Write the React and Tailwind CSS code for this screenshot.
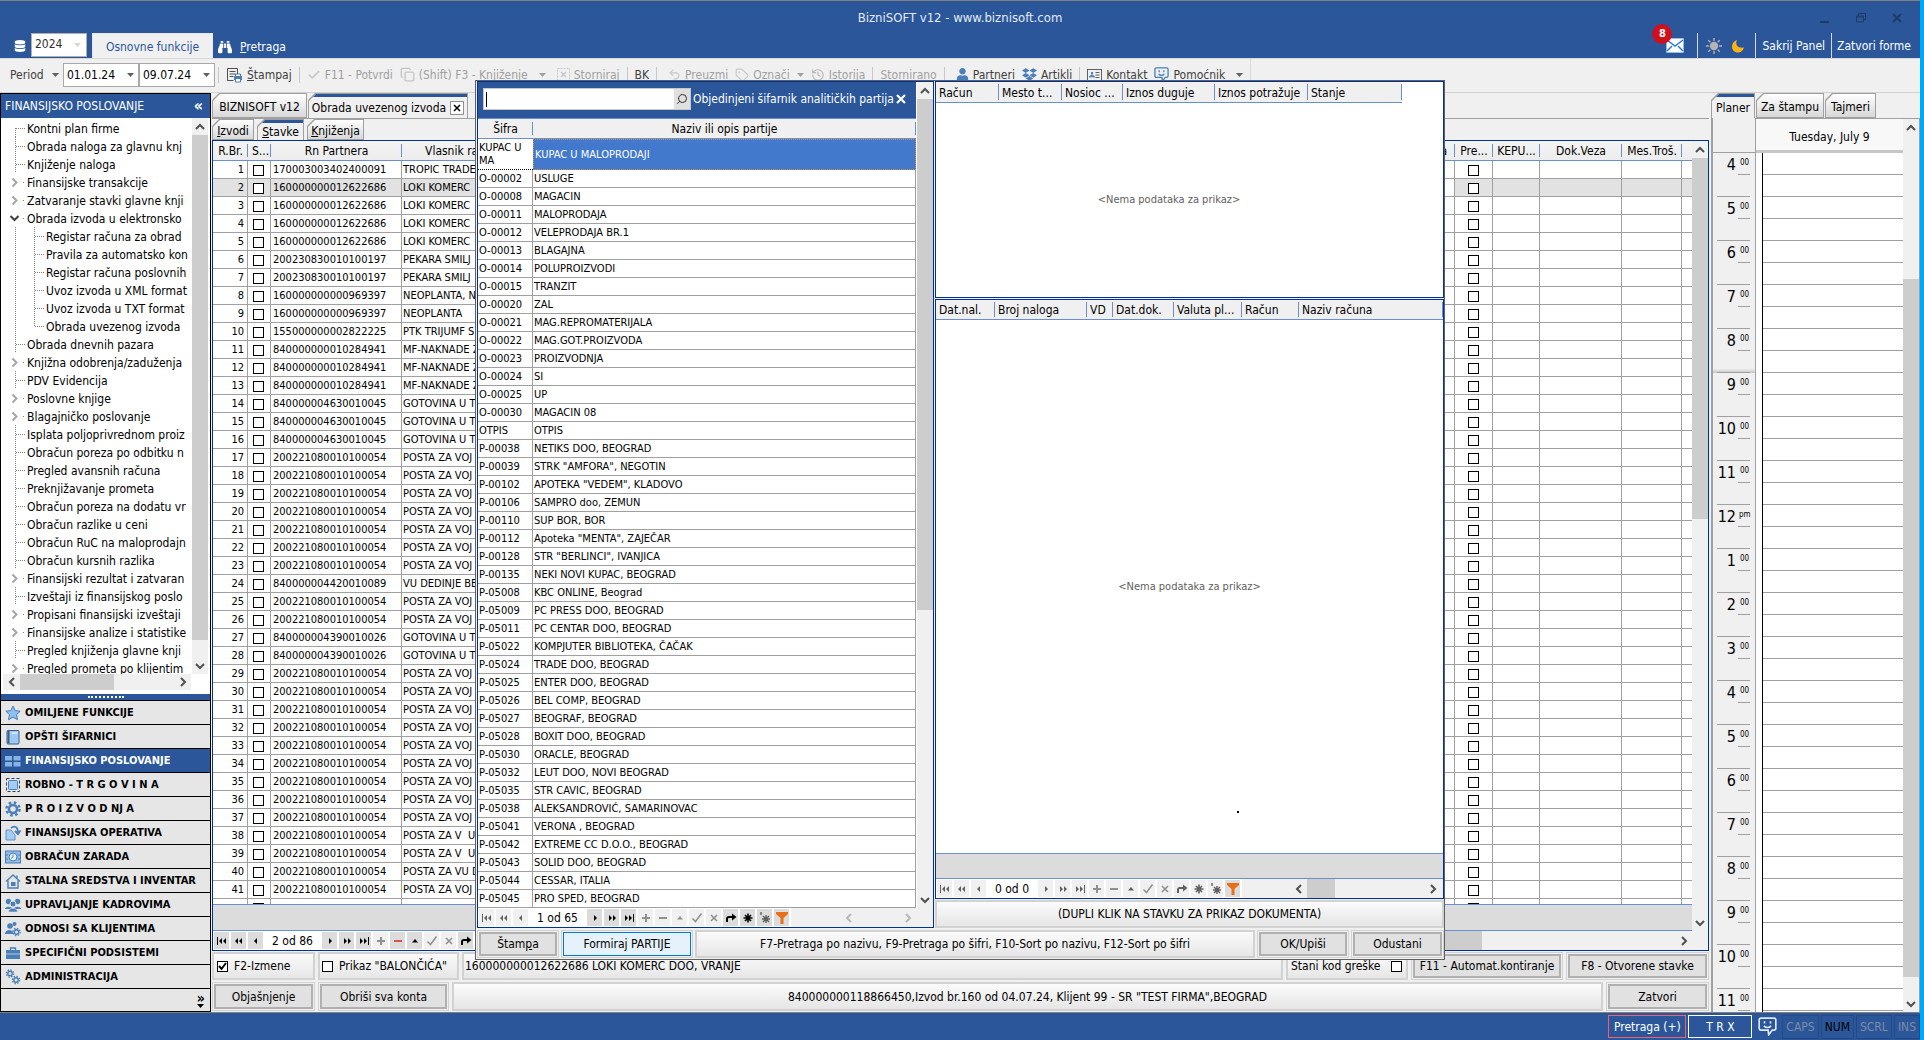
import React from "react";
import { FaBinoculars, FaUser, FaDropbox, FaDatabase } from "react-icons/fa";
import { Search, Copy, Undo2, Tag, History, Check } from "lucide-react";

const tree = [
  { t: "Kontni plan firme", first: true },
  { t: "Obrada naloga za glavnu knj" },
  { t: "Knjiženje naloga" },
  { t: "Finansijske transakcije", node: true },
  { t: "Zatvaranje stavki glavne knji", node: true },
  { t: "Obrada izvoda u elektronsko", node: true, open: true },
  { t: "Registar računa za obrad", sub: true },
  { t: "Pravila za automatsko kon", sub: true },
  { t: "Registar računa poslovnih", sub: true },
  { t: "Uvoz izvoda u XML format", sub: true },
  { t: "Uvoz izvoda u TXT format", sub: true },
  { t: "Obrada uvezenog izvoda", sub: true, last: true },
  { t: "Obrada dnevnih pazara" },
  { t: "Knjižna odobrenja/zaduženja", node: true },
  { t: "PDV Evidencija" },
  { t: "Poslovne knjige", node: true },
  { t: "Blagajničko poslovanje", node: true },
  { t: "Isplata poljoprivrednom proiz" },
  { t: "Obračun poreza po odbitku n" },
  { t: "Pregled avansnih računa" },
  { t: "Preknjižavanje prometa" },
  { t: "Obračun poreza na dodatu vr" },
  { t: "Obračun razlike u ceni" },
  { t: "Obračun RuC na maloprodajn" },
  { t: "Obračun kursnih razlika" },
  { t: "Finansijski rezultat i zatvaran", node: true },
  { t: "Izveštaji iz finansijskog poslo" },
  { t: "Propisani finansijski izveštaji", node: true },
  { t: "Finansijske analize i statistike", node: true },
  { t: "Pregled knjiženja glavne knji" },
  { t: "Pregled prometa po klijentim", node: true },
];

const modules = [
  ["star", "OMILJENE FUNKCIJE"],
  ["book", "OPŠTI ŠIFARNICI"],
  ["tiles", "FINANSIJSKO POSLOVANJE"],
  ["select", "ROBNO - T R G O V I N A"],
  ["gear", "P R O I Z V O D NJ A"],
  ["flow", "FINANSIJSKA OPERATIVA"],
  ["pay", "OBRAČUN ZARADA"],
  ["house", "STALNA SREDSTVA I INVENTAR"],
  ["people", "UPRAVLJANJE KADROVIMA"],
  ["client", "ODNOSI SA KLIJENTIMA"],
  ["case", "SPECIFIČNI PODSISTEMI"],
  ["gears", "ADMINISTRACIJA"],
];

const POSTA = ["200221080010100054", "POSTA ZA VOJ"];
const LOKI = ["160000000012622686", "LOKI KOMERC"];
const GOT = ["840000004630010045", "GOTOVINA U T"];
const MF = ["840000000010284941", "MF-NAKNADE Z"];
const PEKARA = ["200230830010100197", "PEKARA SMILJ"];
const rows = [
  ["170003003402400091", "TROPIC TRADE"],
  LOKI, LOKI, LOKI, LOKI,
  PEKARA, PEKARA,
  ["160000000000969397", "NEOPLANTA, N"],
  ["160000000000969397", "NEOPLANTA"],
  ["155000000002822225", "PTK TRIJUMF S"],
  MF, MF, MF,
  GOT, GOT, GOT,
  POSTA, POSTA, POSTA, POSTA, POSTA, POSTA, POSTA,
  ["840000004420010089", "VU DEDINJE BE"],
  POSTA, POSTA,
  ["840000004390010026", "GOTOVINA U T"],
  ["840000004390010026", "GOTOVINA U T"],
  POSTA, POSTA, POSTA, POSTA, POSTA, POSTA, POSTA, POSTA, POSTA,
  ["200221080010100054", "POSTA ZA V  U"],
  ["200221080010100054", "POSTA ZA V  U"],
  ["200221080010100054", "POSTA ZA VU D"],
  POSTA,
];

const parties = [
  ["O-00002", "USLUGE"],
  ["O-00008", "MAGACIN"],
  ["O-00011", "MALOPRODAJA"],
  ["O-00012", "VELEPRODAJA BR.1"],
  ["O-00013", "BLAGAJNA"],
  ["O-00014", "POLUPROIZVODI"],
  ["O-00015", "TRANZIT"],
  ["O-00020", "ZAL"],
  ["O-00021", "MAG.REPROMATERIJALA"],
  ["O-00022", "MAG.GOT.PROIZVODA"],
  ["O-00023", "PROIZVODNJA"],
  ["O-00024", "SI"],
  ["O-00025", "UP"],
  ["O-00030", "MAGACIN 08"],
  ["OTPIS", "OTPIS"],
  ["P-00038", "NETIKS DOO, BEOGRAD"],
  ["P-00039", 'STRK "AMFORA", NEGOTIN'],
  ["P-00102", 'APOTEKA "VEDEM", KLADOVO'],
  ["P-00106", "SAMPRO doo, ZEMUN"],
  ["P-00110", "SUP BOR, BOR"],
  ["P-00112", 'Apoteka "MENTA", ZAJEČAR'],
  ["P-00128", 'STR "BERLINCI", IVANJICA'],
  ["P-00135", "NEKI NOVI KUPAC, BEOGRAD"],
  ["P-05008", "KBC ONLINE, Beograd"],
  ["P-05009", "PC PRESS DOO, BEOGRAD"],
  ["P-05011", "PC CENTAR DOO, BEOGRAD"],
  ["P-05022", "KOMPJUTER BIBLIOTEKA, ČAČAK"],
  ["P-05024", "TRADE DOO, BEOGRAD"],
  ["P-05025", "ENTER DOO, BEOGRAD"],
  ["P-05026", "BEL COMP, BEOGRAD"],
  ["P-05027", "BEOGRAF, BEOGRAD"],
  ["P-05028", "BOXIT DOO, BEOGRAD"],
  ["P-05030", "ORACLE, BEOGRAD"],
  ["P-05032", "LEUT DOO, NOVI BEOGRAD"],
  ["P-05035", "STR CAVIC, BEOGRAD"],
  ["P-05038", "ALEKSANDROVIĆ, SAMARINOVAC"],
  ["P-05041", "VERONA , BEOGRAD"],
  ["P-05042", "EXTREME CC D.O.O., BEOGRAD"],
  ["P-05043", "SOLID DOO, BEOGRAD"],
  ["P-05044", "CESSAR, ITALIA"],
  ["P-05045", "PRO SPED, BEOGRAD"],
];

const hours = ["4", "5", "6", "7", "8", "9", "10", "11", "12", "1", "2", "3", "4", "5", "6", "7", "8", "9", "10", "11"];

function Chevron({ dir, color = "#505050", size = 12 }) {
  const d = { up: "M2 8l4-4 4 4", down: "M2 4l4 4 4-4", left: "M8 2L4 6l4 4", right: "M4 2l4 4-4 4" }[dir];
  return (
    <svg width={size} height={size} viewBox="0 0 12 12" fill="none" stroke={color} strokeWidth="2">
      <path d={d} />
    </svg>
  );
}

function Caret({ color = "#606060" }) {
  return (
    <svg width="7" height="4" viewBox="0 0 7 4" fill={color} className="shrink-0">
      <path d="M0 0h7L3.500 4z" />
    </svg>
  );
}

// Vertical scrollbar; the space over and under the thumb is given in flex shares
function VScroll({ before = 0, thumb, after, label }) {
  return (
    <div className="flex w-4 shrink-0 flex-col bg-[#f0f0f0]">
      <button aria-label={label + " gore"} className="flex h-[17px] shrink-0 items-center justify-center"><Chevron dir="up" /></button>
      <div className="flex min-h-0 flex-1 flex-col">
        <div style={{ flexGrow: before }} />
        <div className="bg-[#cdcdcd]" style={{ flexGrow: thumb }} />
        <div style={{ flexGrow: after }} />
      </div>
      <button aria-label={label + " dole"} className="flex h-[17px] shrink-0 items-center justify-center"><Chevron dir="down" /></button>
    </div>
  );
}

function Box({ label }) {
  return (
    <input
      type="checkbox"
      aria-label={label}
      className="block h-[11px] w-[11px] appearance-none border border-black bg-white"
    />
  );
}

const glyphs = {
  first: <path d="M1 2v8h1V2zM3 6l3-3v6zM7 6l3-3v6z" />,
  prevPage: <path d="M2 6l3-3v6zM6 6l3-3v6z" />,
  prev: <path d="M4 6l3-3v6z" />,
  next: <path d="M8 6L5 3v6z" />,
  nextPage: <path d="M6 6L3 3v6zM10 6L7 3v6z" />,
  last: <path d="M5 6L2 3v6zM9 6L6 3v6zM10 2v8h1V2z" />,
  plus: <path d="M5 2h2v3h3v2H7v3H5V7H2V5h3z" />,
  minus: <path d="M2 5h8v2H2z" />,
  up: <path d="M6 4l3 3.500H3z" />,
  check: <path d="M1.500 6.500l3 3 6-8" fill="none" stroke="currentColor" strokeWidth="1.500" />,
  x: <path d="M3 3l6 6M9 3l-6 6" fill="none" stroke="currentColor" strokeWidth="1.600" />,
  redo: <path d="M1 10V7c0-2 1-3 3-3h3V1.500L11.500 5 7 8.500V6H4C3 6 3 6.500 3 7.500V10z" />,
  star: <path d="M6 1.500v9M1.500 6h9M3 3l6 6M9 3l-6 6" fill="none" stroke="currentColor" strokeWidth="1.600" />,
  star2: <path d="M7 3v8M3 7h8M4 4l6 6M10 4l-6 6M2 0v3" fill="none" stroke="currentColor" strokeWidth="1.400" />,
  filter: <path d="M0 0h12v2L7.500 6v6h-3V6L0 2z" fill="#e8701a" />,
};

function NavBtn({ g, mode, color }) {
  const cls = {
    dark: "bg-[#dcdcdc] text-black",
    mid: "bg-[#dcdcdc] text-[#606060]",
    light: "bg-[#f0f0f0] text-[#606060]",
    off: "bg-[#f0f0f0] text-[#909090]",
  }[mode];
  return (
    <button aria-label={g} className={"flex h-[17px] w-[15px] shrink-0 items-center justify-center " + cls} style={color ? { color } : undefined}>
      <svg width="12" height="12" viewBox="0 0 12 12" fill="currentColor">{glyphs[g]}</svg>
    </button>
  );
}

function Navigator({ text, textWidth = "w-[55px]", back, fwd, items, children }) {
  return (
    <div className="flex h-[19px] shrink-0 items-center gap-[2px] bg-white pl-px">
      <NavBtn g="first" mode={back} />
      <NavBtn g="prevPage" mode={back} />
      <NavBtn g="prev" mode={back} />
      <span className={"text-center whitespace-nowrap " + textWidth}>{text}</span>
      <NavBtn g="next" mode={fwd} />
      <NavBtn g="nextPage" mode={fwd} />
      <NavBtn g="last" mode={fwd} />
      {items.map(([g, mode, color]) => <NavBtn key={g} g={g} mode={mode} color={color} />)}
      {children}
    </div>
  );
}

function TreeLines({ row }) {
  const dots = { stroke: "#808080", strokeWidth: 1, strokeDasharray: "1 1", fill: "none" };
  if (row.sub) {
    return (
      <svg width="45" height="18" viewBox="0 0 45 18" className="shrink-0">
        <path d="M14.500 0V18" {...dots} />
        <path d={row.last ? "M33.500 0V9" : "M33.500 0V18"} {...dots} />
        <path d="M34 9.500H43" {...dots} />
      </svg>
    );
  }
  return (
    <svg width="26" height="18" viewBox="0 0 26 18" className="shrink-0">
      {!row.node && <path d={row.first ? "M14.500 9V18" : "M14.500 0V18"} {...dots} />}
      {!row.node && <path d="M15 9.500H24" {...dots} />}
      {row.node && <path d="M22 9.500h1" stroke="#808080" />}
      {row.node && (row.open
        ? <path d="M9.500 7l4 4 4-4" fill="none" stroke="#404040" strokeWidth="2" />
        : <path d="M11.500 5.500l4 4-4 4" fill="none" stroke="#a6a6a6" strokeWidth="2" />)}
    </svg>
  );
}

function Gear({ cx, cy, r, w }) {
  return (
    <g transform={`translate(${cx} ${cy})`} fill="none" stroke="#4a7fb8">
      <circle r={r} strokeWidth={w} />
      <circle r={r + w} strokeWidth={w} strokeDasharray={`${((r + w) * Math.PI) / 8} ${((r + w) * Math.PI) / 8}`} />
    </g>
  );
}

function ModuleIcon({ name }) {
  const b = "#4a7fb8";
  const icons = {
    star: <path d="M8 1l2.200 4.600 5 .6-3.700 3.500 1 5L8 12.200 3.500 14.700l1-5L.8 6.200l5-.6z" fill="#8fc0ee" stroke={b} />,
    book: <g><rect x="2" y="1.500" width="12" height="13.500" rx="1" fill="#9cc8f2" stroke="#3d5f8a" /><path d="M3.500 2v12.500" stroke="#3d5f8a" strokeWidth="2" /><path d="M6.500 4h6" stroke="#fff" /></g>,
    tiles: <g fill="#84b4e4"><rect y="3" width="7" height="4.500" /><rect x="8.500" y="3" width="7" height="4.500" /><rect y="9" width="7" height="4.500" /><rect x="8.500" y="9" width="7" height="4.500" /></g>,
    select: <g><rect x="1.500" y="1.500" width="13" height="13" fill="none" stroke="#2b3f5c" strokeDasharray="3 2" /><rect x="3.500" y="3.500" width="9" height="9" rx="1" fill="#a4cdf5" stroke={b} /></g>,
    gear: <Gear cx={8} cy={8} r={4} w={2.5} />,
    flow: <g stroke={b}><path d="M1 5h5l4 5v5H1z" fill="#a4cdf5" strokeWidth=".8" /><path d="M6 3c4-3 7-1 7 5M10 6l3 3 2.500-3.500" fill="none" strokeWidth="1.800" /></g>,
    pay: <g><rect x="0.500" y="2" width="15" height="12" fill="#8fbbe6" stroke={b} /><circle cx="8" cy="8" r="4" fill="#e6f1fb" stroke={b} /><path d="M8 5.500V8l-2 1.500M1 6h2M1 10h2M13 6h2M13 10h2" stroke={b} fill="none" /></g>,
    house: <g fill="none" stroke={b} strokeWidth="1.400"><path d="M1 8.500L8 2l7 6.500M3 7.500V15h10V7.500M12 2.500V5" /><rect x="6" y="9" width="4.500" height="4" fill={b} stroke="none" /></g>,
    people: <g fill={b}><circle cx="3.500" cy="4.500" r="2.700" /><circle cx="12.500" cy="4.500" r="2.700" /><path d="M0 12c0-3 7-3 7 0zM9 12c0-3 7-3 7 0z" /><circle cx="8" cy="7" r="3" stroke="#e6e6e6" /><path d="M3.500 15c0-5 9-5 9 0z" stroke="#e6e6e6" strokeWidth=".6" /></g>,
    client: <g><circle cx="5" cy="5" r="2.800" fill={b} /><circle cx="9.500" cy="3" r="2" fill={b} /><path d="M0 13c0-5 8-5 8-1v1z" fill={b} /><Gear cx={11.5} cy={11} r={2.2} w={1.4} /></g>,
    case: <g><rect x="1" y="5" width="14" height="9" fill={b} /><path d="M5.500 5V3h5v2" fill="none" stroke={b} strokeWidth="1.300" /><path d="M1 9h14" stroke="#cfe0f2" strokeWidth=".8" /></g>,
    gears: <g><Gear cx={5} cy={4.5} r={2.2} w={1.4} /><Gear cx={11} cy={11} r={2.2} w={1.4} /></g>,
  };
  return <svg width="16" height="16" viewBox="0 0 16 16" className="shrink-0">{icons[name]}</svg>;
}

function SmileBubble({ color, size = 16 }) {
  return (
    <svg width={size} height={size} viewBox="0 0 16 16" fill="none" stroke={color} strokeWidth="1.400">
      <path d="M2.500 1h11c1 0 1.500.5 1.500 1.500v7c0 1-.5 1.500-1.500 1.500H12l-3 4-.5-4h-6C1.500 11 1 10.500 1 9.500v-7C1 1.500 1.500 1 2.500 1z" />
      <path d="M5.500 3.500v2M10.500 3.500v2M5 7.500c1.500 1.800 4.500 1.800 6 0" />
    </svg>
  );
}

function Tab({ active, children, width }) {
  return (
    <button
      className={
        "h-full shrink-0 bg-[#a0a0a0] pt-px pr-px pl-px [clip-path:polygon(7px_0,100%_0,100%_100%,0_100%,0_7px)] " +
        (active ? "" : "pb-px ") + width
      }
    >
      <span
        className={
          "flex h-full items-center justify-center gap-1 whitespace-nowrap [clip-path:polygon(7px_0,100%_0,100%_100%,0_100%,0_7px)] " +
          (active ? "border-t-[3px] border-[#2b579a] bg-[#f0f0f0]" : "bg-linear-to-b from-white to-[#d8d8d8] pt-[3px]")
        }
      >
        {children}
      </span>
    </button>
  );
}

function Panel({ className = "", children }) {
  return (
    <div className={"flex items-center border-2 border-[#d2d2d2] bg-linear-to-b from-[#fbfbfb] to-[#e6e6e6] " + className}>
      {children}
    </div>
  );
}

function Btn({ className = "", children }) {
  return (
    <div className={"flex border border-[#d2d2d2] p-px " + className}>
      <button className="flex-1 border-2 border-[#b0b0b0] bg-[#e1e1e1] whitespace-nowrap">{children}</button>
    </div>
  );
}

function ToolBtn({ off, icon, children, className = "" }) {
  return (
    <button className={"flex shrink-0 items-center gap-1 whitespace-nowrap " + (off ? "text-[#a0a0a0] " : "text-[#404040] ") + className}>
      {icon}
      {children}
    </button>
  );
}

const Sep = () => <div className="h-4 w-px shrink-0 bg-[#c8c8c8]" />;

function TopBar() {
  return (
    <header className="shrink-0 border-t border-[#808080] bg-[#2b579a] text-white">
      <div className="flex h-[32px] items-center px-[18px] pt-px">
        <div className="flex-1" />
        <h1 className="text-[13px] text-[#e4ebf5]">BizniSOFT v12 - www.biznisoft.com</h1>
        <div className="flex flex-1 items-center justify-end gap-[26px] text-[#1e3a66]">
          <button aria-label="Umanji"><svg width="10" height="10" viewBox="0 0 10 10"><path d="M0 9h9" stroke="currentColor" strokeWidth="2" /></svg></button>
          <button aria-label="Vrati"><svg width="10" height="10" viewBox="0 0 10 10" fill="none" stroke="currentColor"><path d="M2.500 2.500v-2h7v6h-2M.5 3h7v6h-7zM.5 4h7" /></svg></button>
          <button aria-label="Zatvori"><svg width="10" height="10" viewBox="0 0 10 10"><path d="M1 1l8 8M9 1L1 9" stroke="currentColor" strokeWidth="2" /></svg></button>
        </div>
      </div>
      <div className="flex h-[25px] items-stretch">
        <div className="flex items-center gap-[5px] pl-[14px]">
          <FaDatabase size={12} />
          <div className="relative flex h-full">
            <select aria-label="Godina" className="h-[24px] w-[56px] appearance-none self-start border border-[#b0b0b0] bg-white pb-[3px] pl-[3px] text-[12px] text-[#303030]">
              <option>2024</option>
            </select>
            <span className="pointer-events-none absolute top-[10px] right-[6px]"><Caret color="#d8d8d8" /></span>
          </div>
        </div>
        <button className="ml-[5px] w-[121px] border border-b-0 border-[#e8e8e8] bg-[#f0f0f0] pt-[2px] text-[#2b579a]">Osnovne funkcije</button>
        <button className="ml-[5px] flex items-center gap-2 pt-[2px]"><FaBinoculars size={14} /><span><u>P</u>retraga</span></button>
        <div className="ml-auto flex items-center">
          <div className="relative mr-[13px]">
            <svg width="18" height="15" viewBox="0 0 18 15"><rect width="18" height="15" fill="#fff" stroke="#2b7cd3" /><path d="M1 2l8 6 8-6M1 13l5-5M17 13l-5-5" fill="none" stroke="#2b7cd3" strokeWidth="1.500" /></svg>
            <span className="absolute -top-[14px] -left-[14px] flex h-5 w-5 items-center justify-center rounded-full bg-[#d0101c] text-[11px] font-bold">8</span>
          </div>
          <div className="h-full w-px bg-[#d8d8d8]" />
          <svg width="16" height="16" viewBox="0 0 16 16" className="mx-2" stroke="#b4b4b4" strokeWidth="1.400"><circle cx="8" cy="8" r="3.500" fill="#b4b4b4" /><path d="M8 0v3M8 13v3M0 8h3M13 8h3M2.300 2.300l2 2M11.700 11.700l2 2M13.700 2.300l-2 2M4.300 11.700l-2 2" /></svg>
          <svg width="14" height="14" viewBox="0 0 14 14" className="mr-[10px] ml-px" fill="#fcb316"><path d="M6 1C4 5 6 9.500 13 8.500C12 12 9.500 13.500 7 13.500C3.500 13.500 1 11 1 7.500C1 4.500 3 1.800 6 1z" /></svg>
          <div className="h-full w-px bg-[#d8d8d8]" />
          <button className="px-[6px]">Sakrij Panel</button>
          <div className="h-full w-px bg-[#d8d8d8]" />
          <button className="pr-[9px] pl-[5px]">Zatvori forme</button>
        </div>
      </div>
    </header>
  );
}

function DateBox({ label, value }) {
  return (
    <div className="flex h-6 w-[76px] shrink-0 items-center border border-[#a8a8a8] bg-white pr-1 pl-[3px]">
      <input aria-label={label} defaultValue={value} className="w-0 flex-1 text-[12px] text-black outline-none" />
      <Caret />
    </div>
  );
}

function Toolbar() {
  return (
    <div className="flex h-[35px] shrink-0 items-center border-t border-b border-b-[#d0d0d0] border-t-[#d8d8d8] bg-[#f0f0f0] pb-[2px] pl-[10px]">
      <ToolBtn className="w-[53px] justify-between pr-1">Period <Caret /></ToolBtn>
      <DateBox label="Datum od" value="01.01.24" />
      <DateBox label="Datum do" value="09.07.24" />
      <div className="flex items-center gap-[7px] pl-[3px]">
        <Sep />
        <ToolBtn icon={<svg width="17" height="16" viewBox="0 0 17 16"><path d="M1.500 1.500h10v6M1.500 1.500v12h6M3.500 4.500h6M3.500 7h6M3.500 9.500h4" fill="none" stroke="#505050" /><rect x="8" y="9" width="8" height="4" fill="#4a7fb8" /><path d="M9.500 9V7h5v2M9.500 12v3h5v-3" fill="#fff" stroke="#4a7fb8" /></svg>}><span><u>Š</u>tampaj</span></ToolBtn>
        <Sep />
        <ToolBtn off icon={<Check size={14} strokeWidth={3} color="#c8c8c8" />}>F11 - Potvrdi</ToolBtn>
        <ToolBtn off icon={<Copy size={15} color="#c4c4c4" />}>(Shift) F3 - Knjiženje</ToolBtn>
        <span className="ml-1"><Caret color="#a0a0a0" /></span>
        <ToolBtn off className="ml-1" icon={<svg width="13" height="13" viewBox="0 0 13 13" fill="none" stroke="#c8c8c8"><rect x=".5" y=".5" width="12" height="12" strokeDasharray="2 1" /><path d="M4 4l5 5M9 4L4 9" strokeWidth="1.500" /></svg>}>Storniraj</ToolBtn>
        <Sep />
        <ToolBtn>BK</ToolBtn>
        <Sep />
        <ToolBtn off className="ml-1" icon={<Undo2 size={13} color="#c8c8c8" />}>Preuzmi</ToolBtn>
        <ToolBtn off icon={<Tag size={14} color="#c8c8c8" />}>Označi</ToolBtn>
        <Caret color="#a0a0a0" />
        <ToolBtn off icon={<History size={14} color="#b8b8b8" />}>Istorija</ToolBtn>
        <Sep />
        <ToolBtn off>Stornirano</ToolBtn>
        <Sep />
        <ToolBtn className="ml-1" icon={<FaUser size={13} color="#4a7fb8" />}>Partneri</ToolBtn>
        <ToolBtn icon={<FaDropbox size={15} color="#4a7fb8" />}>Artikli</ToolBtn>
        <Sep />
        <ToolBtn icon={<svg width="15" height="12" viewBox="0 0 15 12" fill="none" stroke="#606060"><rect x=".5" y=".5" width="14" height="11" /><path d="M8.500 3.500h4M8.500 6h4M8.500 8.500h4" /><path d="M3 8.500c0-2 4-2 4 0M5 3v2.500" stroke="#4a7fb8" strokeWidth="2" /></svg>}>Kontakt</ToolBtn>
        <ToolBtn icon={<SmileBubble color="#4a7fb8" size={15} />}>Pomoćnik</ToolBtn>
        <span className="ml-1"><Caret /></span>
        <div className="h-[32px] w-px bg-[#d8d8d8]" />
      </div>
    </div>
  );
}

function Sidebar() {
  return (
    <aside className="flex w-[211px] shrink-0 flex-col border border-black bg-white">
      <div className="flex h-[24px] shrink-0 items-center justify-between bg-[#2b579a] pr-[7px] pl-[4px] text-white">
        <h2 className="whitespace-nowrap">FINANSIJSKO POSLOVANJE</h2>
        <button aria-label="Skupi" className="text-[16px] leading-4 font-bold">«</button>
      </div>
      <div className="flex min-h-0 flex-1 overflow-hidden">
        <ul className="min-w-0 flex-1 overflow-hidden pt-px">
          {tree.map((row) => (
            <li key={row.t} className="flex h-[18px] items-center whitespace-nowrap">
              <TreeLines row={row} />
              <a href="#stavka" className="pt-[2px]">{row.t}</a>
            </li>
          ))}
        </ul>
        <div className="flex pr-[2px]"><VScroll thumb={504} after={17} label="Stablo" /></div>
      </div>
      <div className="flex h-[20px] shrink-0 items-start pl-[2px]">
        <div className="flex h-[16px] w-[188px] items-center bg-[#f0f0f0]">
          <button aria-label="Levo" className="flex w-[17px] justify-center"><Chevron dir="left" /></button>
          <div className="h-full w-[94px] bg-[#cdcdcd]" />
          <div className="flex-1" />
          <button aria-label="Desno" className="flex w-[17px] justify-center"><Chevron dir="right" /></button>
        </div>
      </div>
      <div className="flex h-[6px] shrink-0 items-center justify-center bg-[#2b579a]">
        <div className="w-[36px] border-t-2 border-dotted border-white" />
      </div>
      <nav>
        {modules.map(([icon, label]) => (
          <a
            key={label}
            href="#modul"
            className={
              "flex h-6 items-center gap-[4px] border-t border-black pl-[4px] text-[11px] font-bold whitespace-nowrap " +
              (icon === "tiles" ? "bg-[#2b579a] text-white" : "bg-[#e6e6e6] text-black")
            }
          >
            <ModuleIcon name={icon} />
            {label}
          </a>
        ))}
      </nav>
      <div className="flex h-[23px] shrink-0 flex-col items-end justify-center border-t border-black bg-[#e6e6e6] pr-[5px]">
        <button aria-label="Više" className="flex flex-col items-center text-[14px] leading-3 font-bold">»<Caret color="#000" /></button>
      </div>
    </aside>
  );
}

const headCell = "relative border-b border-[#6a8fd0] px-1 pt-px pb-0 font-normal whitespace-nowrap overflow-hidden after:absolute after:right-0 after:top-[3px] after:bottom-[3px] after:w-px after:bg-[#6a8fd0]";
const cell = "h-[18px] overflow-hidden border-r border-b border-[#a0a0a0] p-0 pt-px whitespace-pre";

function MainGrid() {
  return (
    <div className="mb-px flex min-h-0 flex-1 flex-col border border-[#00309a] bg-white">
      <div className="flex min-h-0 flex-1">
        <div className="flex min-w-0 flex-1 flex-col">
          <div className="min-h-0 flex-1 overflow-hidden">
            <table className="w-full table-fixed border-separate border-spacing-0 text-[11px]">
              <colgroup>
                <col className="w-[35px]" /><col className="w-[23px]" /><col className="w-[131px]" /><col className="w-[128px]" />
                <col /><col className="w-[38px]" /><col className="w-[47px]" /><col className="w-[82px]" /><col className="w-[60px]" /><col className="w-[10px]" />
              </colgroup>
              <thead>
                <tr className="h-[20px] bg-linear-to-b from-[#f4f4f4] to-[#ececec] text-[12px]">
                  <th className={headCell + " px-0"}>R.Br.</th>
                  <th className={headCell + " px-0"}>S...</th>
                  <th className={headCell}>Rn Partnera</th>
                  <th className={headCell + " pl-[23px] text-left"}>Vlasnik ra</th>
                  <th className={headCell + " pr-2 text-right"}>a</th>
                  <th className={headCell + " px-0"}>Pre...</th>
                  <th className={headCell + " px-0"}>KEPU...</th>
                  <th className={headCell}>Dok.Veza</th>
                  <th className={headCell + " px-0"}>Mes.Troš.</th>
                  <th className="border-b border-[#6a8fd0]" />
                </tr>
              </thead>
              <tbody>
                {rows.map(([rn, name], i) => (
                  <tr key={i} className={i === 1 ? "bg-[#e2e2e2]" : "bg-white"}>
                    <td className={cell + " pr-[3px] text-right"}>{i + 1}</td>
                    <td className={cell + " pl-[5px]"}><Box label={"Stavka " + (i + 1)} /></td>
                    <td className={cell + " pl-[2px]"}>{rn}</td>
                    <td className={cell + " pl-px"}>{name}</td>
                    <td className={cell + " bg-white"} />
                    <td className={cell + " pl-[13px]"}><Box label={"Prenos " + (i + 1)} /></td>
                    <td className={cell} />
                    <td className={cell} />
                    <td className={cell} />
                    <td className="border-b border-[#a0a0a0]" />
                  </tr>
                ))}
                <tr>
                  <td className={cell} />
                  <td className={cell + " pl-[5px]"}><Box label="Stavka 42" /></td>
                  <td className={cell} /><td className={cell} /><td className={cell} />
                  <td className={cell + " pl-[13px]"}><Box label="Prenos 42" /></td>
                  <td className={cell} /><td className={cell} /><td className={cell} /><td />
                </tr>
              </tbody>
            </table>
          </div>
          <div className="h-[27px] shrink-0 border-t border-b border-[#6a8fd0] bg-[#dcdcdc]" />
        </div>
        <VScroll thumb={360} after={394} label="Stavke" />
      </div>
      <Navigator
        text="2 od 86"
        back="dark"
        fwd="dark"
        items={[["plus", "off"], ["minus", "mid", "#d85050"], ["up", "dark"], ["check", "off"], ["x", "off"], ["redo", "dark"], ["star", "dark"], ["star2", "mid"], ["filter", "mid"]]}
      >
        <div className="flex h-full flex-1 items-center justify-end bg-[#f0f0f0] pr-4">
          <div className="mr-[194px] h-full w-[300px] bg-[#cdcdcd]" />
          <button aria-label="Desno" className="flex w-4 justify-center"><Chevron dir="right" /></button>
        </div>
      </Navigator>
    </div>
  );
}

function Main() {
  return (
    <main className="flex min-w-0 flex-1 flex-col pr-[2px] pl-px">
      <div className="flex h-[26px] shrink-0 gap-px border-b border-[#a0a0a0]">
        <Tab width="w-[95px]">BIZNISOFT v12</Tab>
        <Tab active width="w-[160px]">
          Obrada uvezenog izvoda
          <span className="flex h-[14px] w-[14px] items-center justify-center border border-[#909090] bg-white">
            <svg width="8" height="8" viewBox="0 0 8 8"><path d="M1 1l6 6M7 1L1 7" stroke="#000" strokeWidth="1.500" /></svg>
          </span>
        </Tab>
      </div>
      <div className="flex h-[21px] shrink-0 gap-[3px]">
        <Tab width="w-[42px]"><span><u>I</u>zvodi</span></Tab>
        <Tab active width="w-[47px]"><span><u>S</u>tavke</span></Tab>
        <Tab width="w-[57px]"><span><u>K</u>njiženja</span></Tab>
      </div>
      <MainGrid />
      <div className="flex flex-col gap-[2px] pb-px">
        <div className="flex h-[28px] gap-[3px]">
          <Panel className="w-[103px] pl-[3px]">
            <span className="relative">
              <input id="f2" type="checkbox" defaultChecked className="block h-[11px] w-[11px] appearance-none border border-black bg-white" />
              <svg width="9" height="9" viewBox="0 0 9 9" className="pointer-events-none absolute top-px left-px"><path d="M1 4l2.500 3L8 1" fill="none" stroke="#000" strokeWidth="2" /></svg>
            </span>
            <label htmlFor="f2" className="ml-[6px]">F2-Izmene</label>
          </Panel>
          <Panel className="w-[141px] pl-[2px]">
            <input id="balon" type="checkbox" className="block h-[11px] w-[11px] appearance-none border border-black bg-white" />
            <label htmlFor="balon" className="ml-[6px] whitespace-nowrap">Prikaz "BALONČIĆA"</label>
          </Panel>
          <Panel className="flex-1 pl-px">160000000012622686 LOKI KOMERC DOO, VRANJE</Panel>
          <Panel className="w-[122px] justify-between pr-1 pl-[3px] whitespace-nowrap">
            <label htmlFor="stani">Stani kod greške</label>
            <input id="stani" type="checkbox" className="block h-[11px] w-[11px] appearance-none border border-black bg-white" />
          </Panel>
          <Btn className="w-[152px]">F11 - Automat.kontiranje</Btn>
          <Btn className="w-[143px]">F8 - Otvorene stavke</Btn>
        </div>
        <div className="flex h-[29px] gap-[3px]">
          <Btn className="w-[103px]">Objašnjenje</Btn>
          <Btn className="w-[131px]">Obriši sva konta</Btn>
          <Panel className="flex-1 justify-center">840000000118866450,Izvod br.160 od 04.07.24, Klijent 99 - SR "TEST FIRMA",BEOGRAD</Panel>
          <Btn className="w-[103px]">Zatvori</Btn>
        </div>
      </div>
    </main>
  );
}

function Planner() {
  return (
    <aside className="flex w-[209px] shrink-0 flex-col">
      <div className="flex h-[25px] shrink-0 gap-px">
        <Tab active width="w-[44px]">Planer</Tab>
        <Tab width="w-[68px]">Za štampu</Tab>
        <Tab width="w-[51px]">Tajmeri</Tab>
      </div>
      <div className="flex min-h-0 flex-1">
        <div className="flex w-[45px] shrink-0 flex-col overflow-hidden border-r border-l-2 border-[#a0a0a0] bg-[#f0f0f0]">
          <div className="h-[35px] shrink-0 border-b border-[#a0a0a0]" />
          {hours.map((h, i) => (
            <div
              key={i}
              className={
                "flex h-[44px] shrink-0 flex-col items-end pr-[5px] pl-1 " +
                (i === 4 ? "bg-linear-to-b from-[#f0f0f0] from-90% to-[#c4c4c4]" : "")
              }
            >
              <div className="flex h-[21px] items-start gap-[3px]">
                <span className="text-[16px] leading-6">{h}</span>
                <span className="w-[11px] text-center text-[8px] leading-5">{h === "12" ? "pm" : "00"}</span>
              </div>
              <div className="h-px w-3 bg-[#a0a0a0]" />
              <div className="mt-[21px] h-px w-full bg-[#a0a0a0]" />
            </div>
          ))}
        </div>
        <div className="flex min-w-0 flex-1 flex-col overflow-hidden border-t border-[#a0a0a0] bg-white">
          <div className="flex h-[31px] shrink-0 items-center justify-center bg-[#f8f8f8] pt-1">Tuesday, July 9</div>
          <div className="h-[3px] shrink-0 bg-[#c6c6c6]" />
          <div className="ml-[6px] min-h-0 flex-1 overflow-hidden border-l border-black">
            {Array.from({ length: 39 }, (_, i) => <div key={i} className="h-[22px] border-b border-[#a0a0a0]" />)}
          </div>
        </div>
        <div className="flex border-t border-r border-[#a0a0a0]"><VScroll before={142} thumb={696} after={18} label="Planer" /></div>
      </div>
    </aside>
  );
}

function PartyList() {
  return (
    <section className="flex min-h-0 w-[457px] shrink-0 flex-col border border-[#00309a] bg-white">
      <div className="flex min-h-0 flex-1">
        <div className="flex min-w-0 flex-1 flex-col pr-px">
          <div className="flex h-[36px] shrink-0 items-center bg-[#2b579a] pb-[2px] pl-[5px] text-white">
            <div className="flex h-[22px] w-[208px] items-center border border-[#c8c8c8] bg-white">
              <span className="ml-[2px] h-[15px] w-px bg-black" />
              <input aria-label="Pretraga partija" className="w-0 flex-1 text-black outline-none" />
              <button aria-label="Traži" className="flex h-full w-4 items-center justify-center bg-[#e0e0e0]"><Search size={12} color="#303030" className="-scale-x-100" /></button>
            </div>
            <h2 className="ml-[2px] shrink-0 whitespace-nowrap">Objedinjeni šifarnik analitičkih partija</h2>
            <button aria-label="Zatvori prozor" className="mr-[10px] ml-auto">
              <svg width="10" height="10" viewBox="0 0 10 10"><path d="M1 1l8 8M9 1L1 9" stroke="#fff" strokeWidth="2.200" /></svg>
            </button>
          </div>
          <table className="w-full table-fixed border-separate border-spacing-0 text-[11px]">
            <colgroup><col className="w-[55px]" /><col /></colgroup>
            <thead>
              <tr className="h-[21px] bg-[#f0f0f0] text-[12px]">
                <th className={headCell + " border-t"}>Šifra</th>
                <th className={headCell + " border-t"}>Naziv ili opis partije</th>
              </tr>
            </thead>
            <tbody>
              <tr className="h-[31px]">
                <td className="border-b border-dotted border-black p-0 pl-px leading-[13px]">KUPAC U MA</td>
                <td className="border border-dotted border-[#d09040] bg-[#4279cc] p-0 pl-px text-white">KUPAC U MALOPRODAJI</td>
              </tr>
              {parties.map(([code, name]) => (
                <tr key={code}>
                  <td className={cell + " pl-px"}>{code}</td>
                  <td className={cell + " pl-px"}>{name}</td>
                </tr>
              ))}
            </tbody>
          </table>
        </div>
        <VScroll thumb={511} after={281} label="Partije" />
      </div>
      <Navigator
        text="1 od 65"
        back="light"
        fwd="dark"
        items={[["plus", "off"], ["minus", "off"], ["up", "off"], ["check", "off"], ["x", "off"], ["redo", "dark"], ["star", "dark"], ["star2", "mid"], ["filter", "mid"]]}
      >
        <div className="flex h-full flex-1 items-center justify-between bg-[#f0f0f0] pr-[19px] pl-[52px]">
          <button aria-label="Levo"><Chevron dir="left" color="#b8b8b8" /></button>
          <button aria-label="Desno"><Chevron dir="right" color="#b8b8b8" /></button>
        </div>
      </Navigator>
    </section>
  );
}

const head2 = "relative border-b border-[#6a8fd0] p-0 pt-px pl-[3px] text-left font-normal whitespace-nowrap after:absolute after:right-0 after:top-[2px] after:bottom-[2px] after:w-px after:bg-[#6a8fd0]";

function PartyCards() {
  return (
    <section className="flex min-w-0 flex-1 flex-col">
      <div className="flex h-[217px] shrink-0 flex-col border border-[#00309a] bg-white">
        <div className="flex flex-1 flex-col self-start">
          <table className="w-[466px] table-fixed border-separate border-spacing-0">
            <colgroup><col className="w-[63px]" /><col className="w-[63px]" /><col className="w-[61px]" /><col className="w-[92px]" /><col className="w-[93px]" /><col className="w-[94px]" /></colgroup>
            <thead>
              <tr className="h-[21px] bg-[#f0f0f0]">
                <th className={head2}>Račun</th><th className={head2}>Mesto t...</th><th className={head2}>Nosioc ...</th>
                <th className={head2}>Iznos duguje</th><th className={head2}>Iznos potražuje</th><th className={head2}>Stanje</th>
              </tr>
            </thead>
          </table>
          <div className="flex flex-1 items-center justify-center text-[11px] text-[#606060]">&lt;Nema podataka za prikaz&gt;</div>
        </div>
      </div>
      <div className="mt-px flex min-h-0 flex-1 flex-col border border-[#00309a] bg-white">
        <table className="w-full table-fixed border-separate border-spacing-0">
          <colgroup><col className="w-[59px]" /><col className="w-[92px]" /><col className="w-[26px]" /><col className="w-[61px]" /><col className="w-[68px]" /><col className="w-[57px]" /><col /></colgroup>
          <thead>
            <tr className="h-[20px] bg-[#f0f0f0]">
              <th className={head2}>Dat.nal.</th><th className={head2}>Broj naloga</th><th className={head2}>VD</th><th className={head2}>Dat.dok.</th>
              <th className={head2}>Valuta pl...</th><th className={head2}>Račun</th><th className={head2}>Naziv računa</th>
            </tr>
          </thead>
        </table>
        <div className="relative flex flex-1 items-center justify-center text-[11px] text-[#606060]">
          &lt;Nema podataka za prikaz&gt;
          <span className="absolute bottom-[40px] left-[301px] h-[2px] w-[2px] bg-black" />
        </div>
        <div className="h-[26px] shrink-0 border-t border-b border-[#6a8fd0] bg-[#dcdcdc]" />
        <Navigator
          text="0 od 0"
          textWidth="w-[48px]"
          back="light"
          fwd="light"
          items={[["plus", "off"], ["minus", "off"], ["up", "light"], ["check", "off"], ["x", "off"], ["redo", "light"], ["star", "light"], ["star2", "light"], ["filter", "mid"]]}
        >
          <div className="flex h-full flex-1 items-center bg-[#f0f0f0] pr-[2px] pl-[49px]">
            <button aria-label="Levo" className="flex w-4 justify-center"><Chevron dir="left" /></button>
            <div className="h-full w-7 bg-[#cdcdcd]" />
            <button aria-label="Desno" className="ml-auto flex w-4 justify-center"><Chevron dir="right" /></button>
          </div>
        </Navigator>
      </div>
      <Panel className="mt-px h-[28px] shrink-0 justify-center">(DUPLI KLIK NA STAVKU ZA PRIKAZ DOKUMENTA)</Panel>
    </section>
  );
}

function PartyDialog() {
  return (
    <div role="dialog" aria-label="Objedinjeni šifarnik" className="absolute top-[80px] left-[475px] flex h-[880px] w-[970px] flex-col border border-[#606060] bg-[#f0f0f0] pl-px">
      <div className="flex min-h-0 flex-1 gap-px">
        <PartyList />
        <PartyCards />
      </div>
      <div className="flex h-[31px] shrink-0 gap-[2px] pt-[2px] pb-px">
        <Btn className="w-[82px]"><span>Štam<u>p</u>a</span></Btn>
        <div className="flex w-[132px] border border-[#d2d2d2] p-px">
          <button className="flex-1 border border-[#0078d7] bg-[#e5f1fb] whitespace-nowrap">Formiraj PARTIJE</button>
        </div>
        <Panel className="flex-1 justify-center">F7-Pretraga po nazivu, F9-Pretraga po šifri, F10-Sort po nazivu, F12-Sort po šifri</Panel>
        <Btn className="w-[92px]">OK/Upiši</Btn>
        <Btn className="w-[93px]">Odustani</Btn>
      </div>
    </div>
  );
}

function StatusBar() {
  const lamp = "flex h-[24px] items-center border border-[#244a86] px-[3px] text-[#7d8ba5]";
  return (
    <footer className="flex h-[28px] shrink-0 items-center justify-end gap-[2px] border-t border-[#808080] bg-[#2b579a]">
      <button className="h-[23px] w-[78px] border border-[#f06070] whitespace-nowrap text-white">Pretraga (+)</button>
      <button className="h-[23px] w-[64px] border border-white text-white">T R X</button>
      <button aria-label="Pomoć" className="flex h-[24px] w-[26px] items-center justify-center"><SmileBubble color="#dce6f4" size={19} /></button>
      <span className={lamp}>CAPS</span>
      <span className="flex h-[24px] items-center border border-[#244a86] px-[3px] text-black">NUM</span>
      <span className={lamp}>SCRL</span>
      <span className={lamp}>INS</span>
    </footer>
  );
}

export default function App() {
  return (
    <div className="relative flex h-screen overflow-hidden bg-[#f0f0f0] font-['DejaVu_Sans_Condensed','Noto_Sans',sans-serif] text-[12px] leading-4 text-black">
      <div className="flex min-w-0 flex-1 flex-col">
        <TopBar />
        <Toolbar />
        <div className="flex min-h-0 flex-1">
          <Sidebar />
          <Main />
          <Planner />
        </div>
        <StatusBar />
      </div>
      <div className="w-1 shrink-0 bg-[#00a8f8]" />
      <PartyDialog />
    </div>
  );
}
